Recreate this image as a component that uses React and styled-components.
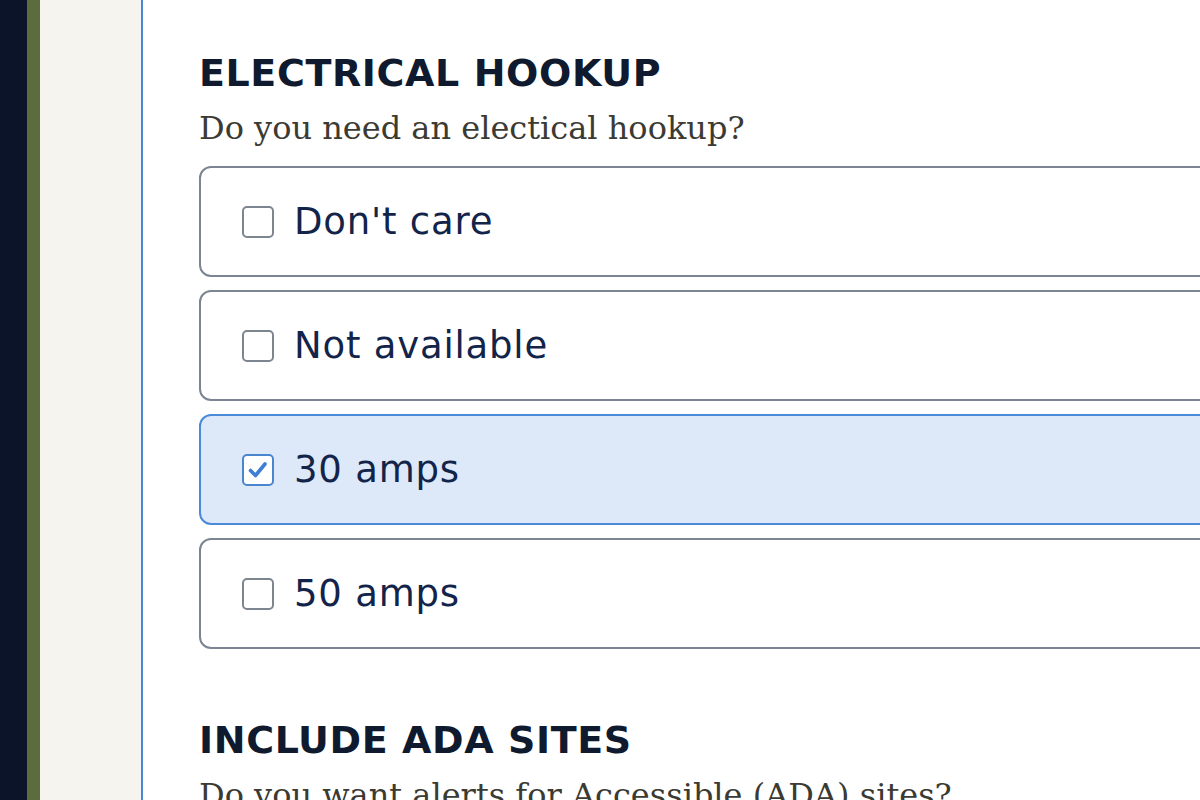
import styled, { createGlobalStyle } from 'styled-components';

const Global = createGlobalStyle`
  html, body {
    margin: 0;
    padding: 0;
    background: #ffffff;
    overflow: hidden;
  }
`

const Shell = styled.div`
  display: flex;
  width: 1200px;
  height: 800px;
  overflow: hidden;
`

const Rail = styled.div`
  flex: 0 0 ${p => p.w}px;
  background: ${p => p.color};
`

const Panel = styled.main`
  flex: 1;
  background: #ffffff;
  border-left: 2px solid #4a86d6;
  padding: 50px 0 0 56px;
  overflow: hidden;
`

const Section = styled.section`
  margin-bottom: 68px;
`

const Heading = styled.h2`
  margin: 0;
  font-family: "DejaVu Sans", "Noto Sans", sans-serif;
  font-weight: 700;
  font-size: 38px;
  line-height: 46px;
  letter-spacing: 0.6px;
  color: #0f1a2e;
`

const Prompt = styled.p`
  margin: 10px 0 16px;
  font-family: "DejaVu Serif", "Liberation Serif", serif;
  font-size: 32px;
  line-height: 44px;
  color: #3b3a33;
`

const Options = styled.div`
  display: flex;
  flex-direction: column;
  gap: 13px;
`

const Option = styled.label`
  display: flex;
  align-items: center;
  gap: 20px;
  width: 1100px;
  height: 111px;
  box-sizing: border-box;
  padding-left: 41px;
  border: 2px solid ${p => (p.checked ? '#4a8ad8' : '#7b8594')};
  border-radius: 12px;
  background: ${p => (p.checked ? '#dde9f8' : '#ffffff')};
  font-family: "DejaVu Sans", "Noto Sans", sans-serif;
  font-size: 37px;
  letter-spacing: 0.8px;
  color: #13244a;
`

const Box = styled.span`
  flex: 0 0 auto;
  display: flex;
  align-items: center;
  justify-content: center;
  width: 32px;
  height: 32px;
  box-sizing: border-box;
  border: 2px solid ${p => (p.checked ? '#4a86d0' : '#7d8591')};
  border-radius: 5px;
  background: #ffffff;
`

function Check() {
  return (
    <svg width="24" height="24" viewBox="0 0 24 24">
      <path d="M4.5 12.5 L9.5 17.5 L19 6" fill="none" stroke="#3d7fd4" strokeWidth="3.6" strokeLinecap="round" strokeLinejoin="round" />
    </svg>
  )
}

const choices = [
  { label: "Don't care", checked: false },
  { label: 'Not available', checked: false },
  { label: '30 amps', checked: true },
  { label: '50 amps', checked: false },
]

export default function App() {
  return (
    <>
      <Global />
      <Shell>
        <Rail w={27} color="#0c1429" />
        <Rail w={13} color="#5d6c3d" />
        <Rail w={101} color="#f6f4ef" />
        <Panel>
          <Section>
            <Heading>ELECTRICAL HOOKUP</Heading>
            <Prompt>Do you need an electical hookup?</Prompt>
            <Options>
              {choices.map(c => (
                <Option key={c.label} checked={c.checked}>
                  <Box checked={c.checked}>{c.checked && <Check />}</Box>
                  {c.label}
                </Option>
              ))}
            </Options>
          </Section>
          <Section>
            <Heading>INCLUDE ADA SITES</Heading>
            <Prompt>Do you want alerts for Accessible (ADA) sites?</Prompt>
          </Section>
        </Panel>
      </Shell>
    </>
  );
}
